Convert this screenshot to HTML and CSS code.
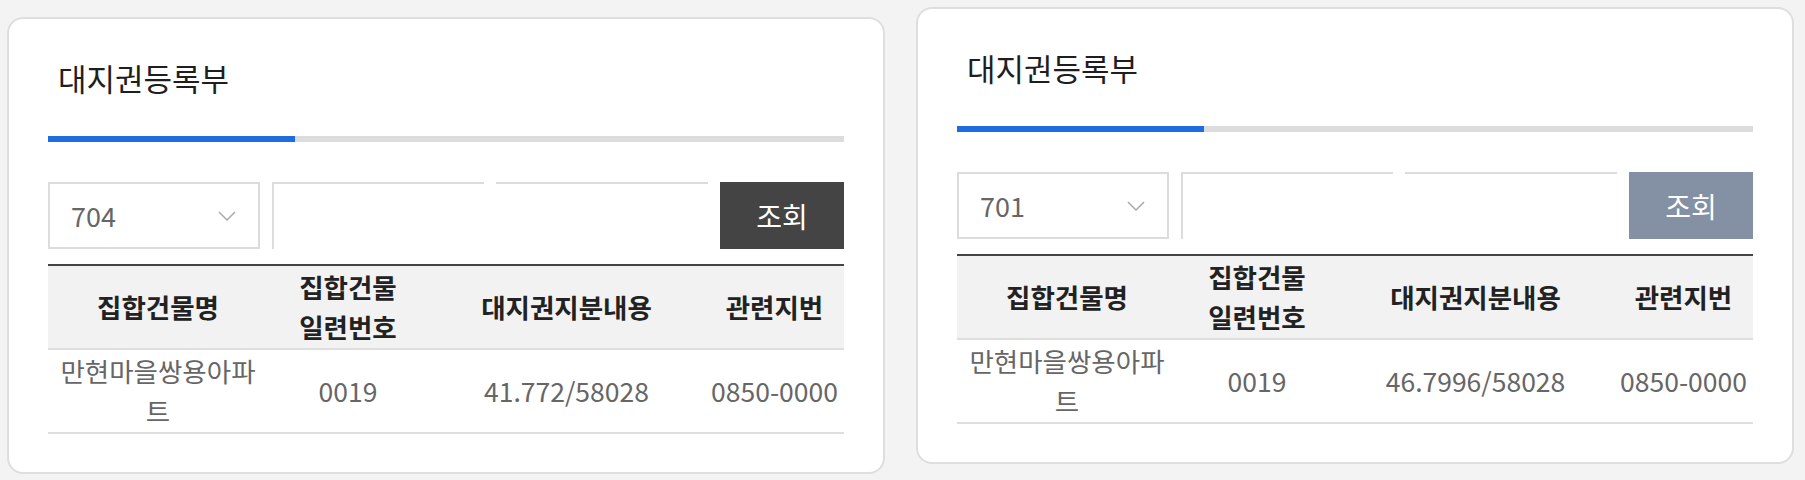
FILE: index.html
```html
<!DOCTYPE html>
<html>
	<head>
		<meta charset="utf-8" />
		<title>대지권등록부</title>
		<link rel="stylesheet" href="styles.css">
	</head>
	<body>

<div class="wrap">
    <div class="card card-first">
        <h2 class="title">대지권등록부</h2>
        <div class="bar"><span class="bar-on"></span></div>
        <div class="search">
            <div class="select">
                <span>704</span>
                <svg class="arrow" width="18" height="10" viewBox="0 0 18 10"><path d="M1 1 L9 9 L17 1" fill="none" stroke="#aaa" stroke-width="1.5"/></svg>
            </div>
            <div class="field field-first"></div>
            <div class="field"></div>
            <button class="btn">조회</button>
        </div>
        <table class="list">
            <colgroup>
                <col style="width:220px">
                <col style="width:160px">
                <col style="width:277px">
                <col style="width:139px">
            </colgroup>
            <thead>
                <tr>
                    <th>집합건물명</th>
                    <th>집합건물<br>일련번호</th>
                    <th>대지권지분내용</th>
                    <th>관련지번</th>
                </tr>
            </thead>
            <tbody>
                <tr>
                    <td>만현마을쌍용아파트</td>
                    <td>0019</td>
                    <td>41.772/58028</td>
                    <td class="nowrap">0850-0000</td>
                </tr>
            </tbody>
        </table>
    </div>

    <div class="card">
        <h2 class="title">대지권등록부</h2>
        <div class="bar"><span class="bar-on"></span></div>
        <div class="search">
            <div class="select">
                <span>701</span>
                <svg class="arrow" width="18" height="10" viewBox="0 0 18 10"><path d="M1 1 L9 9 L17 1" fill="none" stroke="#aaa" stroke-width="1.5"/></svg>
            </div>
            <div class="field field-first"></div>
            <div class="field"></div>
            <button class="btn btn-off">조회</button>
        </div>
        <table class="list">
            <colgroup>
                <col style="width:220px">
                <col style="width:160px">
                <col style="width:277px">
                <col style="width:139px">
            </colgroup>
            <thead>
                <tr>
                    <th>집합건물명</th>
                    <th>집합건물<br>일련번호</th>
                    <th>대지권지분내용</th>
                    <th>관련지번</th>
                </tr>
            </thead>
            <tbody>
                <tr>
                    <td>만현마을쌍용아파트</td>
                    <td>0019</td>
                    <td>46.7996/58028</td>
                    <td class="nowrap">0850-0000</td>
                </tr>
            </tbody>
        </table>
    </div>
</div>

	</body>
</html>
```

FILE: styles.css
```css
* {
    margin: 0;
    padding: 0;
    box-sizing: border-box;
}
body {
    background: #f3f3f3;
    font-family: "Noto Sans CJK KR", "Noto Sans", sans-serif;
    color: #222;
}
.wrap {
    display: flex;
    align-items: flex-start;
    gap: 31px;
    padding: 7px 7px 0;
}
.card {
    width: 878px;
    background: #fff;
    border: 2px solid #dedede;
    border-radius: 16px;
    padding: 39px 39px 38px;
}
.card-first {
    margin-top: 10px;
}
.title {
    font-size: 31px;
    font-weight: 400;
    line-height: 40px;
    padding-left: 10px;
    color: #1e1e1e;
}
.bar {
    height: 6px;
    margin-top: 38px;
    background: #dcdcdc;
}
.bar-on {
    display: block;
    width: 31%;
    height: 6px;
    background: #1f6be0;
}
.search {
    display: flex;
    gap: 12px;
    height: 67px;
    margin-top: 40px;
}
.select {
    width: 212px;
    border: 2px solid #dcdcdc;
    display: flex;
    align-items: center;
    justify-content: space-between;
    padding: 0 22px 0 21px;
    font-size: 27px;
    color: #666;
}
.arrow {
    display: block;
}
.field {
    width: 212px;
    border-top: 2px solid #dcdcdc;
}
.field-first {
    border-left: 2px solid #dcdcdc;
}
.btn {
    width: 124px;
    border: 0;
    background: #444;
    color: #fff;
    font-family: inherit;
    font-size: 28px;
}
.btn-off {
    background: #8491a4;
}
.list {
    width: 100%;
    margin-top: 15px;
    border-collapse: collapse;
    table-layout: fixed;
    border-top: 2px solid #444;
}
.list th,
.list td {
    padding: 1px 8px;
    line-height: 40px;
    font-size: 26.5px;
    text-align: center;
    border-bottom: 2px solid #dedede;
}
.list th {
    background: #f2f2f2;
    font-weight: 700;
    color: #222;
}
.list td {
    color: #666;
}
.list .nowrap {
    padding: 1px 0;
    white-space: nowrap;
}
```
